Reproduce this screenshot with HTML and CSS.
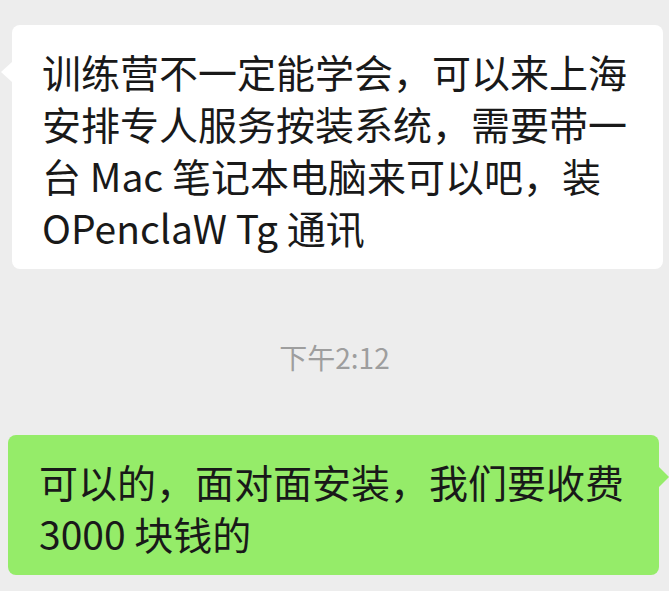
FILE: index.html
```html
<!DOCTYPE html>
<html lang="zh-CN">
<head>
<meta charset="utf-8">
<title>聊天</title>
<link rel="stylesheet" href="styles.css">
</head>
<body>
<div class="chat">
  <div class="msg msg-left">
    <div class="bubble bubble-white">训练营不一定能学会，可以来上海安排专人服务按装系统，需要带一台 Mac 笔记本电脑来可以吧，装 OPenclaW Tg 通讯</div>
  </div>
  <div class="time">下午2:12</div>
  <div class="msg msg-right">
    <div class="bubble bubble-green">可以的，面对面安装，我们要收费 3000 块钱的</div>
  </div>
</div>
</body>
</html>
```
FILE: styles.css
```css
html, body {
  margin: 0;
  padding: 0;
  background: #ededed;
}
body {
  width: 669px;
  height: 591px;
  overflow: hidden;
  font-family: "Noto Sans CJK SC", "Noto Sans", sans-serif;
  color: #191919;
}
.chat {
  display: flex;
  flex-direction: column;
  padding-top: 25px;
}
.msg {
  display: flex;
}
.msg-left {
  padding-left: 12px;
  padding-right: 6px;
}
.msg-right {
  padding-left: 8px;
  padding-right: 10px;
  margin-top: 58px;
}
.bubble {
  position: relative;
  width: 100%;
  box-sizing: border-box;
  border-radius: 8px;
  font-size: 39px;
  line-height: 52px;
  padding: 20px 24px 16px 30px;
  line-break: strict;
}
.bubble-white {
  background: #ffffff;
}
.bubble-green {
  background: #95ec69;
  padding: 20px 24px 16px 31px;
}
.bubble-white::before {
  content: "";
  position: absolute;
  left: -11px;
  top: 37px;
  border-style: solid;
  border-width: 10px 11px 10px 0;
  border-color: transparent #ffffff transparent transparent;
}
.bubble-green::after {
  content: "";
  position: absolute;
  right: -10px;
  top: 32px;
  border-style: solid;
  border-width: 10px 0 10px 10px;
  border-color: transparent transparent transparent #95ec69;
}
.time {
  margin-top: 68px;
  text-align: center;
  font-size: 28px;
  line-height: 40px;
  color: #9e9e9e;
}
```
